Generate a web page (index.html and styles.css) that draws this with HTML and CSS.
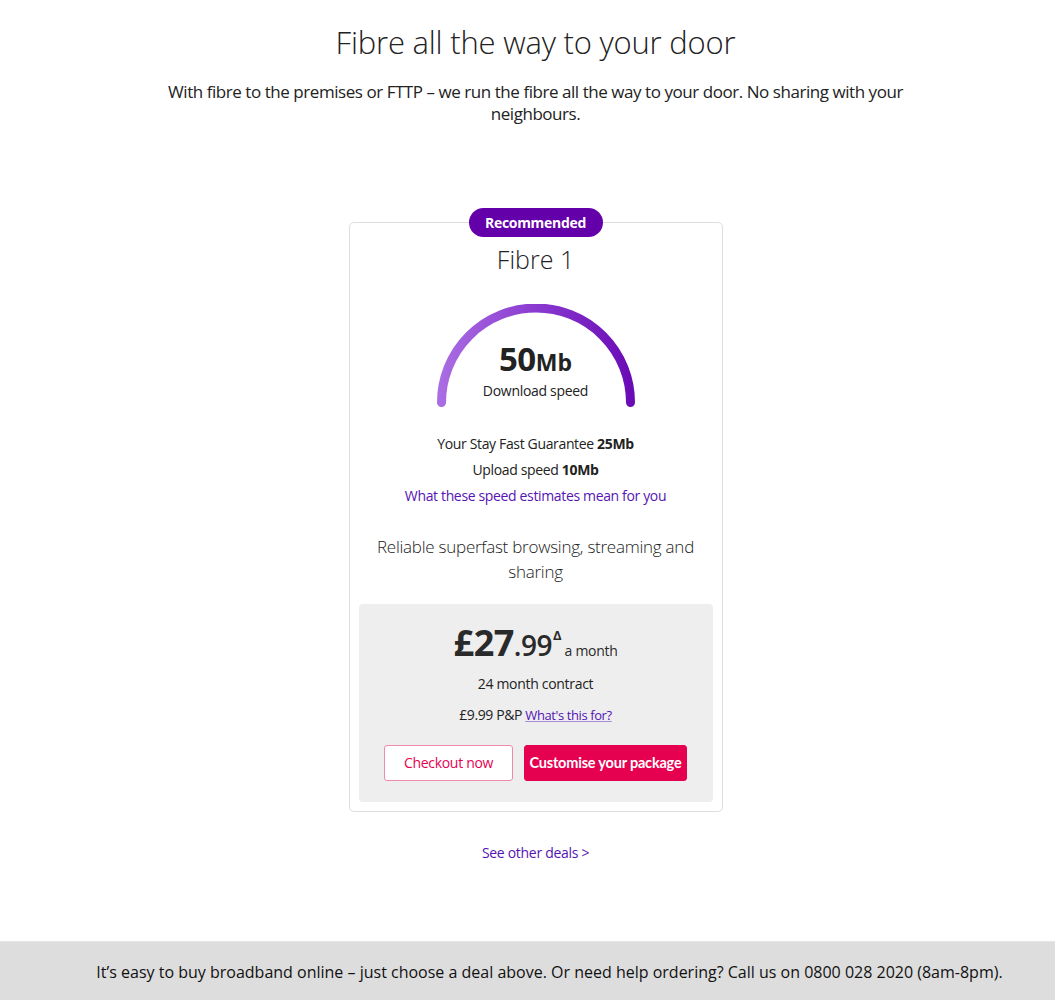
FILE: index.html
```html
<!DOCTYPE html>
<html lang="en">
<head>
<meta charset="utf-8">
<title>Fibre all the way to your door</title>
<link rel="stylesheet" href="styles.css">
</head>
<body>
<main class="page">
  <section class="intro">
    <h1 class="title">Fibre all the way to your door</h1>
    <p class="lead">With fibre to the premises or FTTP – we run the fibre all the way to your door. No sharing with your neighbours.</p>
  </section>

  <section class="card">
    <span class="badge">Recommended</span>
    <h2 class="plan">Fibre 1</h2>

    <div class="gauge">
      <svg class="gauge-arc" width="206" height="104" viewBox="0 0 206 104">
        <defs>
          <linearGradient id="g" x1="0" y1="0" x2="1" y2="0">
            <stop offset="0" stop-color="#a96ce2"/>
            <stop offset="0.5" stop-color="#8a3ad0"/>
            <stop offset="1" stop-color="#6a0cb6"/>
          </linearGradient>
        </defs>
        <path d="M 8.5 98.5 A 94.5 94.5 0 0 1 197.5 98.5" fill="none" stroke="url(#g)" stroke-width="9" stroke-linecap="round"/>
      </svg>
      <div class="gauge-text">
        <div class="speed"><span class="speed-num">50</span><span class="speed-unit">Mb</span></div>
        <div class="speed-label">Download speed</div>
      </div>
    </div>

    <ul class="facts">
      <li>Your Stay Fast Guarantee <b>25Mb</b></li>
      <li>Upload speed <b>10Mb</b></li>
      <li><a class="link" href="#">What these speed estimates mean for you</a></li>
    </ul>

    <p class="desc">Reliable superfast browsing, streaming and sharing</p>

    <div class="panel">
      <div class="price"><span class="pound">£27</span><span class="pence">.99</span><span class="delta">Δ</span><span class="per">a month</span></div>
      <div class="contract">24 month contract</div>
      <div class="pp">£9.99 P&amp;P <a class="pp-link" href="#">What's this for?</a></div>
      <div class="actions">
        <a class="btn btn-outline" href="#">Checkout now</a>
        <a class="btn btn-solid" href="#">Customise your package</a>
      </div>
    </div>
  </section>

  <a class="more" href="#">See other deals &gt;</a>
</main>

<footer class="footer">
  <p>It’s easy to buy broadband online – just choose a deal above. Or need help ordering? Call us on 0800 028 2020 (8am-8pm).</p>
</footer>
</body>
</html>
```

FILE: styles.css
```css
* { box-sizing: border-box; }

html, body {
  margin: 0;
  padding: 0;
  background: #fff;
  color: #222;
  font-family: "Open Sans", "Noto Sans", sans-serif;
}

.page {
  display: flex;
  flex-direction: column;
  align-items: center;
  padding-top: 22px;
  padding-left: 16px;
  height: 941px;
}

.intro {
  display: flex;
  flex-direction: column;
  align-items: center;
  text-align: center;
}

.title {
  margin: 0;
  font-size: 31px;
  line-height: 40px;
  font-weight: 300;
  color: #222;
  letter-spacing: -0.2px;
}

.lead {
  margin: 19px 0 0;
  width: 760px;
  font-size: 17px;
  line-height: 22px;
  font-weight: 400;
  color: #222;
  letter-spacing: -0.45px;
}

.card {
  position: relative;
  margin-top: 97px;
  width: 374px;
  border: 1px solid #dedede;
  border-radius: 5px;
  padding: 20px 9px 9px;
  display: flex;
  flex-direction: column;
  align-items: center;
  text-align: center;
}

.badge {
  position: absolute;
  top: -15px;
  left: 50%;
  transform: translateX(-50%);
  width: 134px;
  height: 29px;
  border-radius: 15px;
  background: #6400aa;
  color: #fff;
  font-weight: 700;
  font-size: 14px;
  line-height: 29px;
  letter-spacing: -0.3px;
}

.plan {
  margin: 0;
  font-size: 25px;
  line-height: 32px;
  font-weight: 300;
  color: #222;
}

.gauge {
  margin-top: 29px;
  display: grid;
  justify-items: center;
}

.gauge-arc, .gauge-text {
  grid-area: 1 / 1;
}

.gauge-text {
  align-self: end;
  padding-bottom: 7px;
  display: flex;
  flex-direction: column;
  align-items: center;
}

.speed {
  line-height: 32px;
  color: #222;
}

.speed-num {
  font-size: 33px;
  font-weight: 700;
  letter-spacing: -0.5px;
}

.speed-unit {
  font-size: 23px;
  font-weight: 700;
}

.speed-label {
  font-size: 14px;
  line-height: 20px;
  letter-spacing: -0.3px;
}

.facts {
  list-style: none;
  margin: 23px 0 0;
  padding: 0;
  font-size: 14px;
  line-height: 26px;
  letter-spacing: -0.35px;
  color: #222;
}

.facts b { font-weight: 700; }

.link {
  color: #5514b4;
  text-decoration: none;
}

.desc {
  margin: 25px 0 0;
  width: 330px;
  font-size: 17px;
  line-height: 25px;
  font-weight: 300;
  color: #222;
  letter-spacing: -0.25px;
}

.panel {
  margin-top: 20px;
  align-self: stretch;
  background: #eeeeee;
  border-radius: 4px;
  padding: 21px 0 21px;
  display: flex;
  flex-direction: column;
  align-items: center;
}

.price {
  display: flex;
  align-items: baseline;
  line-height: 36px;
  color: #2a2a2a;
}

.pound {
  font-size: 36px;
  font-weight: 700;
  letter-spacing: -0.5px;
}

.pence {
  font-size: 28px;
  font-weight: 600;
  letter-spacing: -0.5px;
}

.delta {
  font-size: 13px;
  font-weight: 700;
  align-self: flex-start;
  line-height: 16px;
  margin-left: 1px;
  margin-top: 2px;
}

.per {
  font-size: 14px;
  margin-left: 3px;
  letter-spacing: -0.3px;
}

.contract {
  margin-top: 5px;
  font-size: 14px;
  line-height: 20px;
  letter-spacing: -0.3px;
}

.pp {
  margin-top: 11px;
  font-size: 14px;
  line-height: 20px;
  letter-spacing: -0.4px;
}

.pp-link {
  color: #5514b4;
  font-size: 13px;
  text-decoration: underline;
  text-decoration-color: #a88ad8;
}

.actions {
  margin-top: 20px;
  display: flex;
  gap: 11px;
}

.btn {
  height: 36px;
  border-radius: 3px;
  font-size: 14px;
  line-height: 34px;
  text-decoration: none;
  white-space: nowrap;
  letter-spacing: -0.3px;
  border: 1px solid #e60050;
}

.btn-outline {
  width: 129px;
  background: #fff;
  color: #e60050;
  border-color: #ef8aa8;
}

.btn-solid {
  width: 163px;
  background: #e60050;
  color: #fff;
  font-family: "Lato", "Open Sans", sans-serif;
  font-weight: 700;
  font-size: 14.5px;
  letter-spacing: -0.2px;
}

.more {
  margin-top: 31px;
  font-size: 14px;
  line-height: 20px;
  color: #5514b4;
  text-decoration: none;
  letter-spacing: -0.3px;
}

.footer {
  height: 59px;
  background: #dddddd;
  border-top: 1px solid #e6e6e6;
  display: flex;
  align-items: center;
  justify-content: center;
  padding-left: 44px;
}

.footer p {
  margin: 0;
  font-family: "Liberation Sans Narrow", "Open Sans", sans-serif;
  font-size: 16px;
  color: #111;
  transform: translateY(1px);
}
```
